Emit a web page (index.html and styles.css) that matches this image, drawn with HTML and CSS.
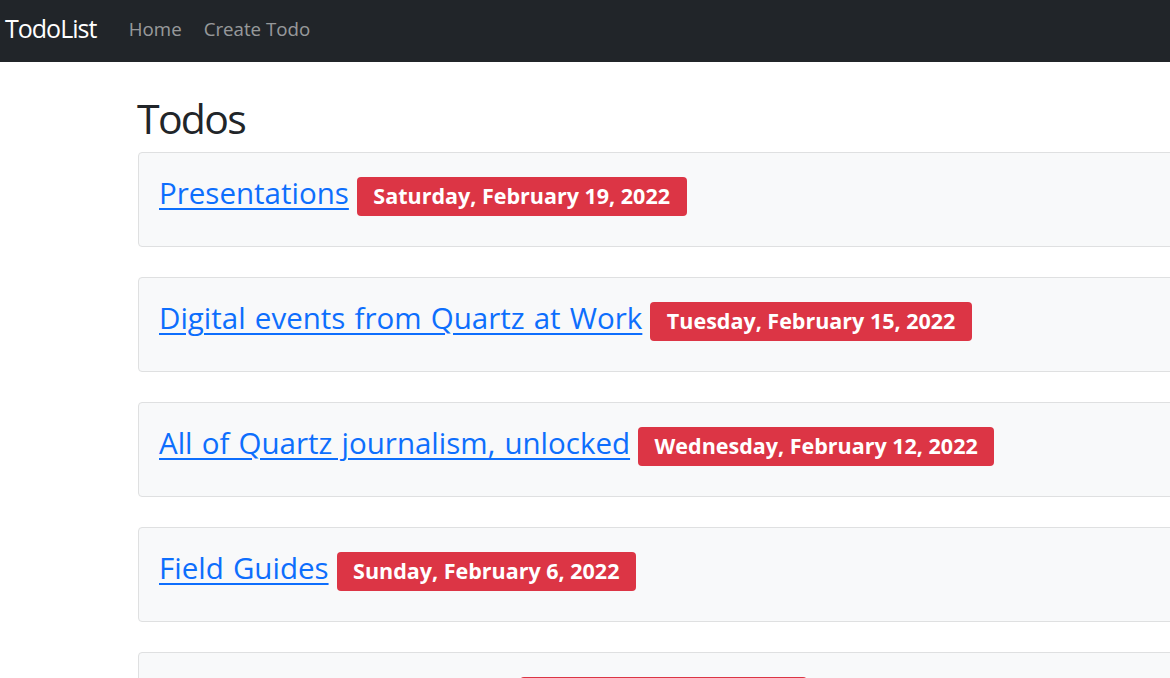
FILE: index.html
```html
<!DOCTYPE html>
<html lang="en">
<head>
<meta charset="utf-8">
<title>TodoList</title>
<link rel="stylesheet" href="styles.css">
</head>
<body>
<nav class="navbar">
  <a class="brand" href="#">TodoList</a>
  <ul class="nav">
    <li><a class="nav-link" href="#">Home</a></li>
    <li><a class="nav-link" href="#">Create Todo</a></li>
  </ul>
</nav>
<main class="container">
  <h1 class="title">Todos</h1>
  <div class="card">
    <h3 class="todo"><a href="#">Presentations</a><span class="badge">Saturday, February 19, 2022</span></h3>
  </div>
  <div class="card">
    <h3 class="todo"><a href="#">Digital events from Quartz at Work</a><span class="badge">Tuesday, February 15, 2022</span></h3>
  </div>
  <div class="card">
    <h3 class="todo"><a href="#">All of Quartz journalism, unlocked</a><span class="badge">Wednesday, February 12, 2022</span></h3>
  </div>
  <div class="card">
    <h3 class="todo"><a href="#">Field Guides</a><span class="badge">Sunday, February 6, 2022</span></h3>
  </div>
  <div class="card">
    <h3 class="todo"><a href="#">Quartz Daily Brief e-mails</a><span class="badge">Friday, February 4, 2022</span></h3>
  </div>
</main>
</body>
</html>
```
FILE: styles.css
```css
html, body {
  margin: 0;
  padding: 0;
  overflow: hidden;
  background: #fff;
}
body {
  font-family: "Open Sans", "Noto Sans", sans-serif;
  color: #212529;
  width: 1170px;
}
.navbar {
  background: #212529;
  height: 62px;
  box-sizing: border-box;
  display: flex;
  align-items: flex-start;
  padding-left: 5px;
}
.brand {
  color: #fff;
  text-decoration: none;
  font-size: 25px;
  letter-spacing: -1px;
  line-height: normal;
  margin-top: 10.6px;
  margin-right: 32.5px;
}
.nav {
  display: flex;
  list-style: none;
  margin: 16px 0 0 0;
  padding: 0;
  gap: 22px;
}
.nav-link {
  color: rgba(255, 255, 255, 0.55);
  text-decoration: none;
  font-size: 18.7px;
  line-height: normal;
}
.container {
  margin-left: 138px;
  width: 1100px;
  padding-top: 31.5px;
}
.title {
  font-size: 41px;
  font-weight: 400;
  letter-spacing: -1.7px;
  line-height: 49px;
  margin: 0 0 9.5px -1px;
}
.card {
  background: #f8f9fa;
  border: 1px solid #dfe0e1;
  border-radius: 4px;
  height: 95px;
  box-sizing: border-box;
  margin-bottom: 30px;
  padding: 0 20px;
}
.todo {
  margin: 0;
  padding-top: 24px;
  display: flex;
  align-items: baseline;
  gap: 8px;
  font-size: 29.5px;
  font-weight: 500;
  line-height: 1;
  word-spacing: 1.5px;
}
.todo a {
  color: #0d6efd;
  text-decoration: underline;
  text-decoration-thickness: 2px;
  text-underline-offset: 4px;
}
.badge {
  background: #dc3545;
  color: #fff;
  font-size: 21.5px;
  font-weight: 700;
  line-height: 1;
  word-spacing: 0;
  padding: 8px 16.5px 9px;
  border-radius: 4px;
}
```
